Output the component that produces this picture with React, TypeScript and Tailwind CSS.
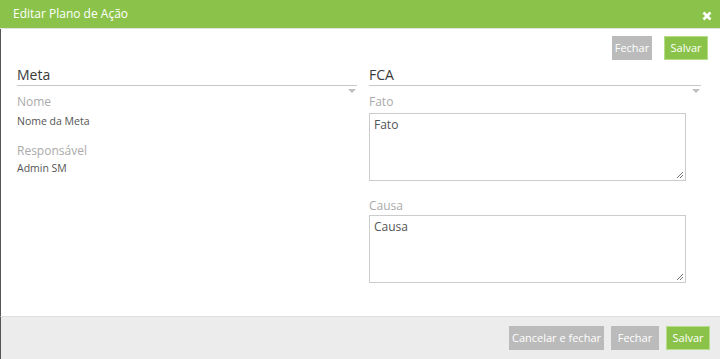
import React from "react";

function Caret() {
  return (
    <div className="flex justify-end pr-[1px] pt-[3px]">
      <div className="w-0 h-0 border-l-[4px] border-r-[4px] border-t-[4px] border-l-transparent border-r-transparent border-t-[#bdbdbd]" />
    </div>
  );
}

function SelectLine({ text, w }: { text: string; w: string }) {
  return (
    <div className={w}>
      <div className="h-[24px] flex items-end pb-[3px] text-[14px] leading-none text-[#3a3a3a]">
        {text}
      </div>
      <div className="h-[1px] bg-[#c8c8c8]" />
      <Caret />
    </div>
  );
}

function Btn({ label, w, green }: { label: string; w: string; green?: boolean }) {
  return (
    <button
      className={
        "h-[24px] text-[11px] text-white flex items-center justify-center " +
        w +
        (green ? " bg-[#8bc34a] border border-[#b5dd8a]" : " bg-[#bbbbbb]")
      }
    >
      {label}
    </button>
  );
}

function Area({ label, value, gap }: { label: string; value: string; gap: string }) {
  return (
    <div>
      <div className="text-[12px] leading-[16px] text-[#aaaaaa]">{label}</div>
      <div className={gap + " w-[317px] h-[68px] border border-[#cccccc] relative"}>
        <div className="px-[4px] pt-[3px] text-[12px] leading-[16px] text-[#555]">{value}</div>
        <svg className="absolute right-[1px] bottom-[1px]" width="8" height="8" viewBox="0 0 8 8">
          <path d="M7 1L1 7M7 4L4 7" stroke="#777" strokeWidth="1" />
        </svg>
      </div>
    </div>
  );
}

export default function App() {
  return (
    <div
      className="w-[720px] h-[359px] flex flex-col bg-white overflow-hidden"
      style={{ fontFamily: '"Open Sans", "Liberation Sans", sans-serif' }}
    >
      <div className="h-[28px] shrink-0 bg-[#8bc34a] flex items-center justify-between pl-[13px] pr-[8px]">
        <span className="text-[12px] text-white">Editar Plano de Ação</span>
        <svg width="10" height="10" viewBox="0 0 10 10" className="mt-[4px]">
          <path d="M1.5 1.5L8.5 8.5M8.5 1.5L1.5 8.5" stroke="#fff" strokeWidth="2.6" />
        </svg>
      </div>
      <div className="h-[1px] bg-[#e3e3e3] shrink-0" />
      <div className="flex-1 border-l border-[#555] flex flex-col">
        <div className="flex justify-end gap-[12px] pt-[7px] pr-[12px]">
          <Btn label="Fechar" w="w-[40px]" />
          <Btn label="Salvar" w="w-[44px]" green />
        </div>
        <div className="flex pl-[16px] gap-[12px] mt-[1px]">
          <div className="w-[340px]">
            <SelectLine text="Meta" w="w-[340px]" />
            <div className="mt-[1px] text-[12px] leading-[16px] text-[#aaaaaa]">Nome</div>
            <div className="mt-[3px] text-[10.5px] leading-[16px] text-[#555]">Nome da Meta</div>
            <div className="mt-[14px] text-[12px] leading-[16px] text-[#aaaaaa]">Responsável</div>
            <div className="mt-[1px] text-[10.5px] leading-[16px] text-[#555]">Admin SM</div>
          </div>
          <div className="w-[332px]">
            <SelectLine text="FCA" w="w-[332px]" />
            <div className="mt-[1px]">
              <Area label="Fato" value="Fato" gap="mt-[3px]" />
            </div>
            <div className="mt-[17px]">
              <Area label="Causa" value="Causa" gap="mt-[1px]" />
            </div>
          </div>
        </div>
      </div>
      <div className="h-[43px] shrink-0 border-t border-[#e0e0e0] border-l border-l-[#555] bg-[#ececec] flex items-center justify-end gap-[7px] pr-[10px]">
        <Btn label="Cancelar e fechar" w="w-[95px]" />
        <Btn label="Fechar" w="w-[48px]" />
        <Btn label="Salvar" w="w-[44px]" green />
      </div>
    </div>
  );
}
